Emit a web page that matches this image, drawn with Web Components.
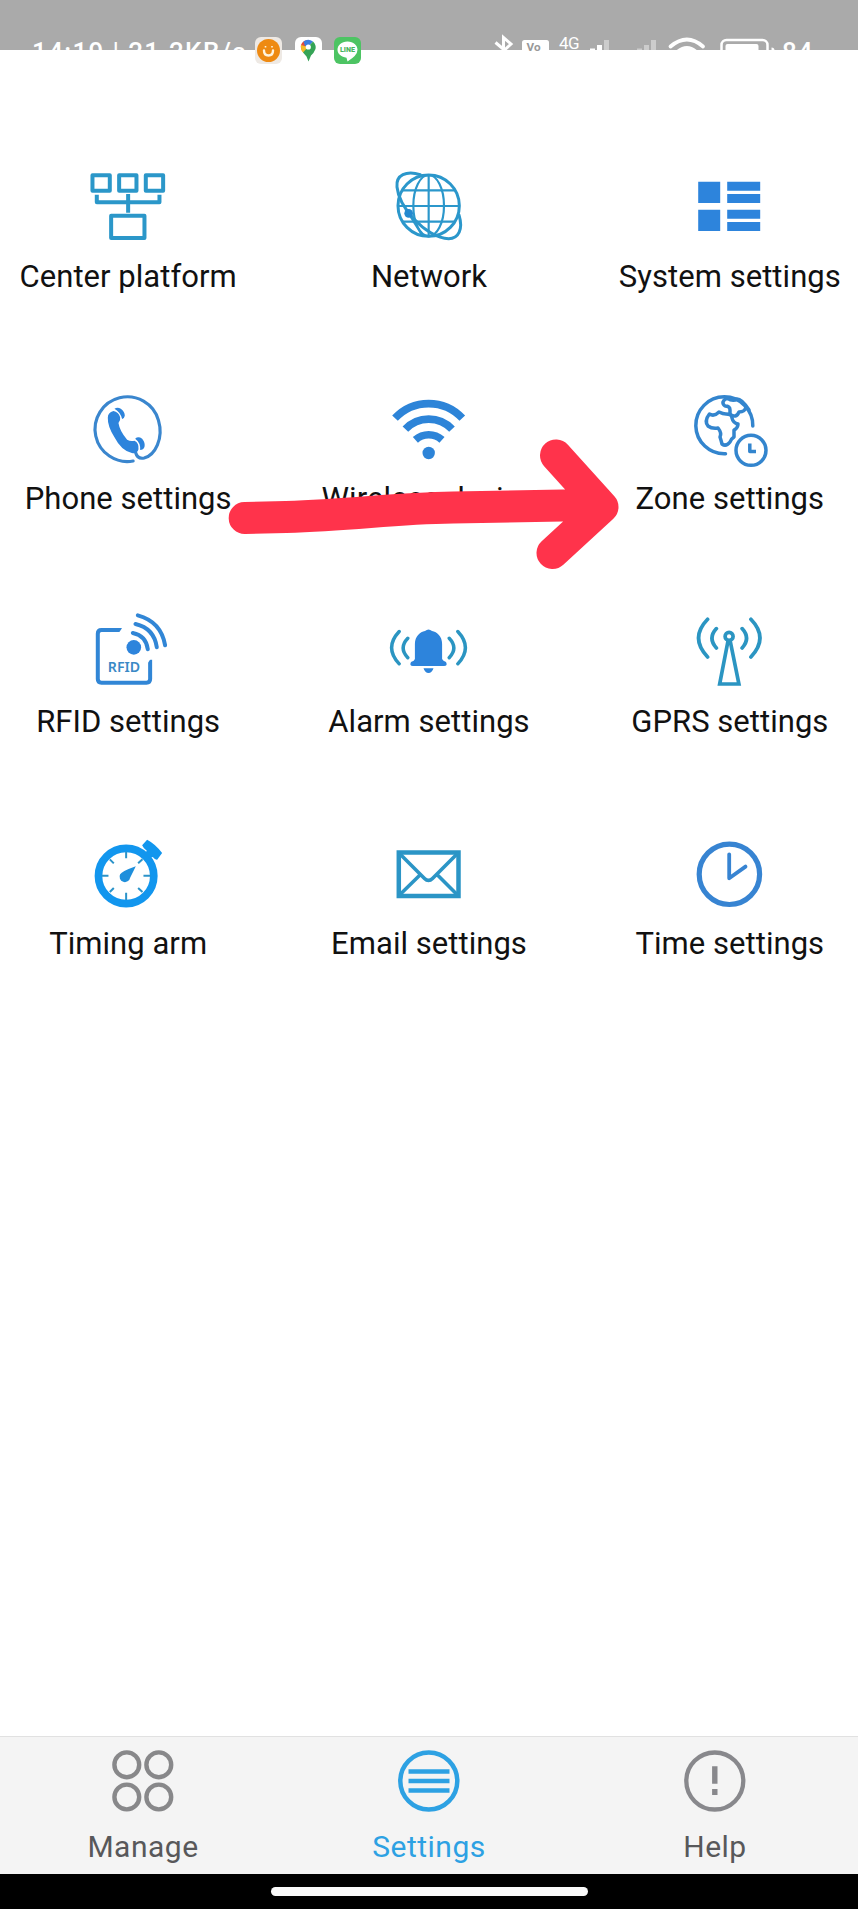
<!DOCTYPE html>
<html lang="en">
<head>
<meta charset="utf-8">
<title>Settings</title>
<style>
html,body{margin:0;background:#fff}
body{font-family:Roboto,"Liberation Sans",sans-serif}
</style>
</head>
<body>
<settings-screen></settings-screen>
<script>
const define = (name, html) => {
  const t = document.createElement('template');
  t.innerHTML = html;
  customElements.define(name, class extends HTMLElement {
    constructor() {
      super();
      this.attachShadow({mode: 'open'}).append(t.content.cloneNode(true));
    }
  });
};

/* Icon artwork: [viewBox, markup] */
const L = '-45 0 90 90';
const ICONS = {
  platform: ['249.6 33 270 270', `<g fill="none" stroke="#2b97c9" stroke-width="12" stroke-linejoin="round">
    <path d="M278 76h52v46h-52zM358 76h52v46h-52zM438 76h52v46h-52zM334 197h100v67H334z"/>
    <path d="M291 134v23h188v-23M385 132v56"/></g>`],
  network: ['133 33 270 270', `<g fill="none" stroke="#2b97cb" stroke-width="9">
    <circle cx="267" cy="167" r="92"/><path stroke-width="6.500" d="M267 75v184M176 168h182M190 121h154M190 215h154"/>
    <ellipse stroke-width="6.500" cx="267" cy="167" rx="46" ry="92"/>
    <path d="M242 74C200 61 168 75 172 111c3 30 22 65 50 95 31 33 71 60 105 60 30 0 44-28 31-71" stroke-linecap="round"/>
    <path stroke-width="7" d="M208 192l39 63"/></g><circle cx="207" cy="190" r="13" fill="#2489cf"/>`],
  system: ['254.4 33 270 270', `<path fill="#2d84dc" d="M294 95h66v64h-66zM294 179h66v64h-66zM381 95h99v27h-99zM381 132h99v27h-99zM381 179h99v27h-99zM381 216h99v27h-99z"/>`],
  phone: ['249.6 11 270 270', `<path fill="none" stroke="#3a86ce" stroke-width="9.500" stroke-linecap="round" d="M400 242A97 97 0 1 1 476 120C492 174 466 224 433 233Q413 237 408 218"/>
    <path fill="#2d84dc" d="M324 112Q324 97 341 92Q356 94 361 111Q363 120 356 128Q360 153 382 178Q392 184 404 181Q418 187 416 207Q412 222 396 218Q365 212 344 171Q323 137 324 112z"/>
    <path fill="#2d84dc" d="M344 85Q353 79 363 85Q375 94 375 106Q374 113 367 116Q362 95 344 85zM406 175Q415 167 427 175Q437 187 434 200Q431 209 421 209Q423 187 406 175z"/>`],
  wifi: [L, `<g fill="none" stroke="#2d84d8" stroke-width="7.7"><path d="M-34 34.2A46 46 0 0 1 33.3 34.2M-23.6 45.2A32 32 0 0 1 23 45.2M-13.6 55.8A20 20 0 0 1 13 55.8"/></g><circle cx="-.3" cy="69" r="6.2" fill="#2d84d8"/>`],
  zone: [L, `<g fill="none" stroke="#3385ce" stroke-width="3.5" stroke-linejoin="round" stroke-linecap="round">
    <path d="M22.8 42A28.5 28.5 0 1 0-4.5 69.8"/>
    <path d="M-3 14Q-10 18-5 22Q0 22 0 26V30Q6 35 9 28Q15 28 16 23L19 26Q12 15 7 15Q3 18-3 14"/>
    <path d="M-20.6 30Q-16 33-11 28Q-7 30-4 30Q2 30 2 34Q3 39 8 40Q8 44 4 46Q4 50 4 53Q1 55 0 58Q-4 63-8 60Q-9 56-10 53Q-8 49-12 44Q-18 45-22 42Q-26 37-20.6 30z"/>
    <circle cx="21" cy="66.3" r="15"/><path stroke-linecap="butt" d="M19.8 59.5v7.9h6.2"/></g>`],
  rfid: ['249.6 19 270 270', `<g fill="none" stroke="#3186d6" stroke-width="12">
    <path d="M366 91H305Q294 91 294 102V238Q294 249 305 249H440Q451 249 451 238V180"/>
    <path stroke-width="12" stroke-linecap="round" d="M399 100Q439 108 444 149M407 73Q463 86 471 143M414 47Q484 66 496 137"/></g>
    <path fill="#fff" d="M356 101l14-20v20zM444 190l14-20h-14z"/>
    <circle cx="402" cy="143" r="22" fill="#2d84dc"/>
    <text x="324" y="217" font-size="45" font-weight="600" font-family="Noto Sans,Open Sans,sans-serif" fill="#3a8ac6" textLength="97" lengthAdjust="spacingAndGlyphs">RFID</text>`],
  alarm: [L, `<path fill="#2d84dc" d="M-14.1 38C-14 30-9 26-4 25Q-.5 22 3 25C8 26 13.1 30 13.1 38V53Q14 55 17 56Q19 60 15 60H-16Q-20 60-18 56Q-14.5 55-14.1 53zM-5.5 62.3h10Q3 67-.5 67Q-4 67-5.5 62.3z"/>
    <g fill="none" stroke="#2b95c2" stroke-width="3.4" stroke-linecap="round"><path d="M-29.8 25.5Q-45 41.7-29.8 57.8M-21.2 32.3Q-30.5 42-21.2 51.7M28.8 25.5Q44 41.7 28.8 57.8M20.2 32.3Q29.5 42 20.2 51.7"/></g>`],
  gprs: [L, `<g fill="none" stroke="#2b95c2" stroke-width="3.7" stroke-linecap="round"><circle cx="-.9" cy="30.4" r="4"/><path d="M-2 35L-10.3 78H8.9L.2 35"/>
    <path d="M-22.4 13.3Q-40.5 32-22.4 51M-13.6 22.6Q-22.5 32.3-13.6 42M20.9 13.3Q39 32 20.9 51M12.1 22.6Q21 32.3 12.1 42"/></g>`],
  timer: ['249.6 12 270 270', `<circle cx="379" cy="153" r="83" fill="none" stroke="#1296ee" stroke-width="23"/>
    <path fill="#1296ee" d="M427 61L442 44Q467 57 487 84L472 104Q466 105 459 96L450 100L436 85L441 77Q431 71 427 61z"/>
    <path stroke="#2b93c9" stroke-width="6" d="M379 80v20M379 203v22M306 152h20M431 152h21M330 103l12 12M428 103l-13 12M330 201l12-12M428 201l-13-12"/>
    <path fill="#1e8fdc" d="M408 124Q366 139 361 148A16 16 0 1 0 391 158Q396 149 408 124z"/>`],
  email: [L, `<g fill="none" stroke="#2b95c6" stroke-width="4.5"><path d="M-30.2 23.5H29.5V66.9H-30.2z"/><path stroke-width="3.6" d="M-30 24L-4.5 49.5Q-.5 53.5 3.5 49.5L29 24M-30 66.5L-8.5 45.5M29 66.5L8 45.5"/></g>`],
  time: [L, `<g fill="none" stroke="#3784d2"><circle cx="-.6" cy="45.3" r="30.2" stroke-width="5.2"/><path stroke-width="3.8" stroke-linecap="round" stroke-linejoin="round" d="M-.8 25.3v24L15.5 37.6"/></g>`],
  manage: ['0 0 62 62', `<g fill="none" stroke="#88888a" stroke-width="4.4"><circle cx="14.8" cy="14.8" r="12.4"/><circle cx="46.8" cy="14.8" r="12.4"/><circle cx="14.8" cy="47" r="12.4"/><circle cx="46.8" cy="47" r="12.4"/></g>`],
  settings: ['0 0 62 62', `<g fill="none" stroke="#2da1e3" stroke-width="4.5"><circle cx="30.800" cy="31" r="28.5"/><path d="M10.5 21.5h41M10.5 31h41M10.5 40.5h41"/></g>`],
  help: ['0 0 62 62', `<g fill="none" stroke="#88888c" stroke-width="4.3"><circle cx="30.800" cy="31" r="28.5"/><path stroke-width="5.4" d="M30.800 16.3v17.5M30.800 39v6"/></g>`]
};

customElements.define('app-icon', class extends HTMLElement {
  connectedCallback() {
    const [box, art] = ICONS[this.getAttribute('name')];
    const s = this.getAttribute('size') || 90;
    this.attachShadow({mode: 'open'}).innerHTML =
      `<style>:host{display:block;width:${s}px;height:${s}px;flex:none}svg{display:block}</style><svg width="${s}" height="${s}" viewBox="${box}">${art}</svg>`;
  }
});

/* The bar's white glyphs run past its lower edge onto the white page */
define('status-bar', `<style>
  :host{display:flex;height:50px;background:#aaa;color:#fff}
  .left,.right{display:flex;align-items:flex-start;height:50px;flex:none}
  .left{width:480px}.right{width:378px}
  .clock{width:222.3px;padding-left:32px;margin-right:1px;font:500 26px/30px Roboto,sans-serif;white-space:pre;letter-spacing:1.35px}
  .clock span{display:block;margin-top:37px}
  .app{margin-top:37px;margin-right:12.3px;flex:none}
  svg{display:block;flex:none;overflow:visible}
  .net{font:17px/18px Roboto,sans-serif;margin:34px 0 0 10px;width:21px;letter-spacing:-.6px}
  .pct{font:500 26px/30px Roboto,sans-serif;margin:37px 0 0 7px;letter-spacing:1px}
</style>
<div class="left">
  <div class="clock"><span>14:19 | 21.2KB/s</span></div>
  <svg class="app" width="27" height="27" viewBox="0 0 27 27"><rect width="27" height="27" rx="6" fill="#eee9e4"/><circle cx="13.5" cy="13.5" r="11.5" fill="#ee8a12"/><path d="M9 13.500q0 5 4.500 5t4.500-5" fill="none" stroke="#fff3dc" stroke-width="2.400" stroke-linecap="round"/><path d="M10.500 9v1.500M17 9v1.500" stroke="#fff3dc" stroke-width="1.600"/></svg>
  <svg class="app" width="27" height="27" viewBox="0 0 27 27"><rect width="27" height="27" rx="6" fill="#fff"/>
    <path d="M7 6Q9 3 13.500 3L13 10.500L8 15Q4 10 7 6z" fill="#e34a3c"/><path d="M8.500 4.500Q13 1 18 4.500L11 12z" fill="#3b7de0"/><path d="M6 8L13 10L8.500 16Q5.500 13 6 8z" fill="#f5bd28"/><path d="M18 4.500Q21.500 8 20.500 12Q19 16 16 18.500L13.500 24.500L11.500 19.500L8 15.500L13 10z" fill="#35a456"/><circle cx="13.300" cy="10" r="2.600" fill="#fff"/></svg>
  <svg class="app" width="27" height="27" viewBox="0 0 27 27"><rect width="27" height="27" rx="6" fill="#4dc463"/><path d="M13.500 4.500C7.500 4.500 3.500 8.300 3.500 12.800C3.500 17 7.500 20 12.500 20.800L13.500 24.500Q23.500 18.500 23.500 12.800C23.500 8.300 19.500 4.500 13.500 4.500z" fill="#fff"/><text x="6" y="15" font-family="Roboto,sans-serif" font-size="6.500" font-weight="900" fill="#49b65e" textLength="15" lengthAdjust="spacingAndGlyphs">LINE</text></svg>
</div>
<div class="right">
  <svg width="42" height="50" viewBox="480 0 42 50" fill="none" stroke="#fff" stroke-width="3"><path d="M495.500 42.500L508 53M503.500 52V37.500L511 44L499 55"/></svg>
  <svg width="27" height="50" viewBox="522 0 27 50"><rect x="522" y="40" width="27" height="20" rx="2.500" fill="#fff"/><text x="526.500" y="51" font-family="Roboto,sans-serif" font-size="11" font-weight="700" fill="#999" textLength="14" lengthAdjust="spacingAndGlyphs">Vo</text></svg>
  <span class="net">4G</span>
  <svg width="183" height="50" viewBox="580 0 183 50">
    <path fill="#fff" d="M590 48.500h5v1.500h-5zM597 45h5v5h-5z"/><path fill="#ccc" d="M604 40h5v10h-5zM637 48.500h5v1.500h-5zM644 45h5v5h-5zM651 40h5v10h-5z"/>
    <g fill="none" stroke="#fff" stroke-width="3.800" stroke-linecap="round"><path d="M670.500 46.500Q687 32.500 703 46.500M678 51.500Q687 44.500 695.500 51.500"/></g>
    <rect x="721.500" y="40" width="46" height="22" rx="5" fill="none" stroke="#fff" stroke-width="2.500"/><rect x="725.500" y="44" width="33" height="14" rx="2" fill="#fff"/>
  </svg>
  <svg width="12" height="50" viewBox="763 0 12 50"><path d="M771.500 47.500q3 0 3 3h-3z" fill="#fff"/></svg>
  <span class="pct">84</span>
</div>`);

define('menu-tile', `<style>
  :host{display:flex;flex-direction:column;align-items:center;height:222.65px;font:31px/40px Roboto,sans-serif;color:#111;white-space:nowrap}
  .label{margin-top:5.500px;letter-spacing:.04px}
</style><slot name="icon"></slot><div class="label"><slot></slot></div>`);

define('nav-tab', `<style>
  :host{display:flex;flex-direction:column;align-items:center;flex:1;font:30px/36px Roboto,sans-serif;color:#58585a}
  :host([active]){color:#2da1e3}
  .label{margin-top:16.500px;letter-spacing:.5px}
</style><slot name="icon"></slot><div class="label"><slot></slot></div>`);

define('tab-bar', `<style>
  :host{display:flex;box-sizing:border-box;height:138px;padding-top:13px;background:#f4f4f4;border-top:1px solid #e1e1e1}
</style><slot></slot>`);

define('home-bar', `<style>
  :host{display:flex;justify-content:center;align-items:flex-start;height:35px;padding-top:13px;box-sizing:border-box;background:#000}
  div{width:317px;height:9px;border-radius:5px;background:#fafafa}
</style><div></div>`);

/* Hand-drawn arrow lying over the tiles */
define('marker-arrow', `<style>
  :host{display:block;position:absolute;left:220px;top:430px;pointer-events:none}svg{display:block}
</style><svg width="410" height="150" viewBox="220 430 410 150" fill="none" stroke="#ff334b" stroke-width="32" stroke-linecap="round" stroke-linejoin="round">
<path d="M244.700 518L286 517Q320 516 370 512Q420 508 453 507.500L590 505M556 455.500L602.500 507L552.500 553"/></svg>`);

const tiles = [['platform','Center platform'],['network','Network'],['system','System settings'],
  ['phone','Phone settings'],['wifi','Wireless device'],['zone','Zone settings'],
  ['rfid','RFID settings'],['alarm','Alarm settings'],['gprs','GPRS settings'],
  ['timer','Timing arm'],['email','Email settings'],['time','Time settings']];

define('settings-screen', `<style>
  :host{display:flex;flex-direction:column;height:1909px;width:858px;position:relative;background:#fff;overflow:hidden}
  main{flex:1;display:grid;grid-template-columns:repeat(3,minmax(0,1fr));column-gap:44.500px;align-content:start;padding-top:111px}
</style>
<status-bar></status-bar>
<main>${tiles.map(([i, t]) => `<menu-tile><app-icon slot="icon" name="${i}"></app-icon>${t}</menu-tile>`).join('')}</main>
<tab-bar>
  <nav-tab><app-icon slot="icon" name="manage" size="62"></app-icon>Manage</nav-tab>
  <nav-tab active><app-icon slot="icon" name="settings" size="62"></app-icon>Settings</nav-tab>
  <nav-tab><app-icon slot="icon" name="help" size="62"></app-icon>Help</nav-tab>
</tab-bar>
<home-bar></home-bar>
<marker-arrow></marker-arrow>`);
</script>
</body>
</html>
